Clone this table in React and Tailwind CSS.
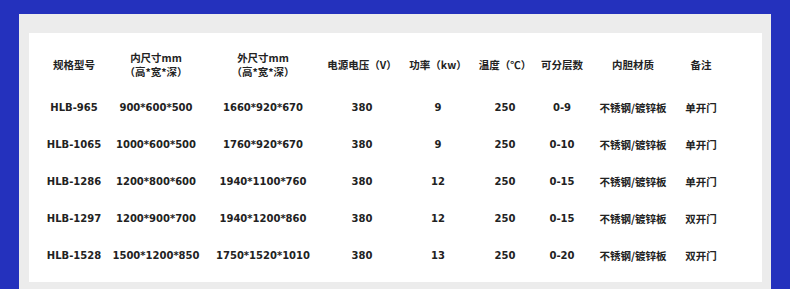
const cols = [
  "w-[90px]",
  "w-[74px]",
  "w-[140px]",
  "w-[58px]",
  "w-[94px]",
  "w-[40px]",
  "w-[74px]",
  "w-[68px]",
  "w-[68px]",
];

const headers = [
  ["规格型号"],
  ["内尺寸mm", "（高*宽*深）"],
  ["外尺寸mm", "（高*宽*深）"],
  ["电源电压（V）"],
  ["功率（kw）"],
  ["温度（℃）"],
  ["可分层数"],
  ["内胆材质"],
  ["备注"],
];

const rows = [
  ["HLB-965", "900*600*500", "1660*920*670", "380", "9", "250", "0-9", "不锈钢/镀锌板", "单开门"],
  ["HLB-1065", "1000*600*500", "1760*920*670", "380", "9", "250", "0-10", "不锈钢/镀锌板", "单开门"],
  ["HLB-1286", "1200*800*600", "1940*1100*760", "380", "12", "250", "0-15", "不锈钢/镀锌板", "单开门"],
  ["HLB-1297", "1200*900*700", "1940*1200*860", "380", "12", "250", "0-15", "不锈钢/镀锌板", "双开门"],
  ["HLB-1528", "1500*1200*850", "1750*1520*1010", "380", "13", "250", "0-20", "不锈钢/镀锌板", "双开门"],
];

const font = "font-['DejaVu_Sans','Noto_Sans_CJK_SC',sans-serif]";

export default function App() {
  return (
    <div className="h-[289px] w-[790px] overflow-hidden bg-[#2431bd] pl-[19px] pt-[14px]">
      <div className="h-[290px] w-[752px] bg-[#ececec] pl-[10px] pt-[19px]">
        <div className={`w-[733px] bg-white pb-[8px] pt-[14px] text-[#222] ${font}`}>
          <div className="flex h-[36px] items-center">
            {headers.map((h, i) => (
              <div
                key={i}
                className={`${cols[i]} flex shrink-0 flex-col items-center justify-center whitespace-nowrap font-['Noto_Sans_CJK_SC',sans-serif] text-[10.5px] font-bold leading-[14px]`}
              >
                {h.map((line) => (
                  <span key={line}>{line}</span>
                ))}
              </div>
            ))}
          </div>
          <div className="mt-[6px]">
            {rows.map((r) => (
              <div key={r[0]} className="flex h-[37px] items-center">
                {r.map((cell, i) => (
                  <div
                    key={i}
                    className={`${cols[i]} flex shrink-0 justify-center whitespace-nowrap font-bold ${
                      i >= 7
                        ? "font-['Noto_Sans_CJK_SC',sans-serif] text-[10.5px]"
                        : "text-[10px]"
                    }`}
                  >
                    {cell}
                  </div>
                ))}
              </div>
            ))}
          </div>
        </div>
      </div>
    </div>
  );
}
